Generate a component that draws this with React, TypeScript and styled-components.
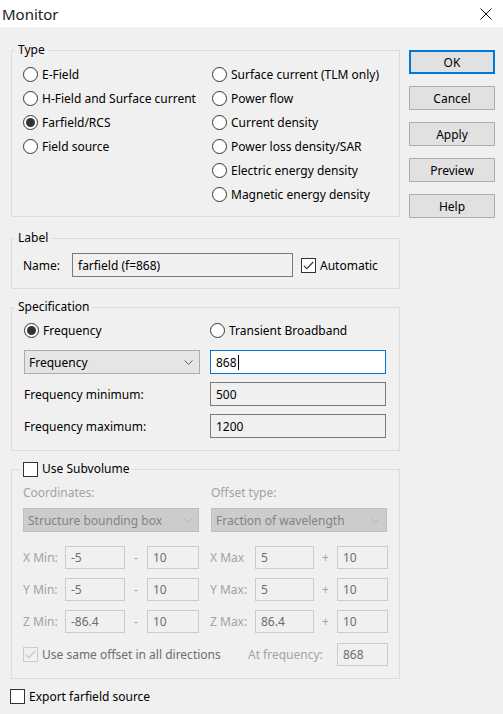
import React from "react";
import styled, { createGlobalStyle, css } from "styled-components";

const GlobalStyle = createGlobalStyle`
  html, body {
    margin: 0;
    padding: 0;
    background: #f0f0f0;
  }
  body {
    font-family: "Noto Sans", "Liberation Sans", sans-serif;
    font-size: 12px;
    color: #000;
  }
`;

const Window = styled.div`
  width: 503px;
  height: 714px;
  background: #f0f0f0;
  display: flex;
  flex-direction: column;
  overflow: hidden;
`;

const TitleBar = styled.div`
  height: 27px;
  flex: none;
  background: #fff;
  display: flex;
  align-items: center;
  justify-content: space-between;
  padding: 0 11px 0 2px;
`;

const Title = styled.span`
  font-size: 15px;
  color: #222;
`;

const CloseIcon = styled.svg`
  width: 12px;
  height: 12px;
  display: block;
`;

const Body = styled.div`
  display: flex;
  gap: 9px;
  padding: 15px 0 0 11px;
`;

const MainColumn = styled.div`
  width: 389px;
  display: flex;
  flex-direction: column;
`;

const ButtonColumn = styled.div`
  width: 86px;
  margin-top: 8px;
  display: flex;
  flex-direction: column;
  gap: 12px;
`;

const DialogButton = styled.button<{ $default?: boolean }>`
  height: 24px;
  box-sizing: border-box;
  background: #e1e1e1;
  border: 1px solid #adadad;
  font: inherit;
  color: #000;
  padding: 0;
  ${(p) =>
    p.$default &&
    css`
      border: 2px solid #0078d7;
    `}
`;

const Group = styled.fieldset<{ $mt?: number; $pb: number; $px?: number }>`
  margin: ${(p) => p.$mt ?? 0}px 0 0 0;
  padding: 0 ${(p) => p.$px ?? 11}px ${(p) => p.$pb}px;
  border: 1px solid #dcdcdc;
  min-width: 0;
`;

const Legend = styled.legend<{ $ml?: number }>`
  padding: 0 3px;
  margin-left: ${(p) => p.$ml ?? -8}px;
  height: 16px;
  line-height: 16px;
`;

const LegendInner = styled.span`
  display: inline-flex;
  align-items: center;
  gap: 4px;
  height: 16px;
`;

const TypeColumns = styled.div`
  display: flex;
  padding-top: 4px;
`;

const RadioColumn = styled.div<{ $w?: number }>`
  display: flex;
  flex-direction: column;
  width: ${(p) => (p.$w ? `${p.$w}px` : "auto")};
`;

const RadioLabel = styled.label<{ $h?: number }>`
  display: flex;
  align-items: center;
  gap: 4px;
  height: ${(p) => p.$h ?? 24}px;
  white-space: nowrap;
`;

const RadioCircle = styled.span<{ $checked?: boolean }>`
  width: 15px;
  height: 15px;
  box-sizing: border-box;
  border: 1px solid #333;
  border-radius: 50%;
  background: #fff;
  flex: none;
  display: flex;
  align-items: center;
  justify-content: center;
  ${(p) =>
    p.$checked &&
    css`
      &::after {
        content: "";
        width: 9px;
        height: 9px;
        border-radius: 50%;
        background: #333;
      }
    `}
`;

const CheckLabel = styled.label<{ $disabled?: boolean }>`
  display: inline-flex;
  align-items: center;
  gap: 4px;
  white-space: nowrap;
  color: ${(p) => (p.$disabled ? "#6d6d6d" : "#000")};
`;

const CheckBox = styled.span<{ $disabled?: boolean }>`
  width: 15px;
  height: 15px;
  box-sizing: border-box;
  border: 1px solid ${(p) => (p.$disabled ? "#cccccc" : "#333")};
  background: ${(p) => (p.$disabled ? "#f0f0f0" : "#fff")};
  flex: none;
  display: flex;
  align-items: center;
  justify-content: center;
`;

const NameRow = styled.div`
  display: flex;
  align-items: center;
  gap: 8px;
  padding-top: 7px;
`;

const FieldLabel = styled.span<{ $w?: number; $disabled?: boolean }>`
  width: ${(p) => (p.$w ? `${p.$w}px` : "auto")};
  flex: none;
  white-space: nowrap;
  color: ${(p) => (p.$disabled ? "#a3a3a3" : "#000")};
`;

type BoxState = "focus" | "normal" | "disabled";

const TextBox = styled.div<{ $w?: number; $h?: number; $state?: BoxState }>`
  width: ${(p) => (p.$w ? `${p.$w}px` : "100%")};
  height: ${(p) => p.$h ?? 24}px;
  box-sizing: border-box;
  flex: none;
  display: flex;
  align-items: center;
  padding-left: 5px;
  border: 1px solid
    ${(p) =>
      p.$state === "focus" ? "#0078d7" : p.$state === "disabled" ? "#cccccc" : "#7a7a7a"};
  background: ${(p) => (p.$state === "focus" ? "#fff" : "#f0f0f0")};
  color: ${(p) => (p.$state === "disabled" ? "#6d6d6d" : "#000")};
  white-space: nowrap;
`;

const Caret = styled.span`
  width: 1px;
  height: 15px;
  background: #000;
  margin-left: 1px;
`;

const Combo = styled.div<{ $disabled?: boolean }>`
  height: 24px;
  box-sizing: border-box;
  display: flex;
  align-items: center;
  justify-content: space-between;
  padding: 0 6px 0 4px;
  border: 1px solid ${(p) => (p.$disabled ? "#bfbfbf" : "#acacac")};
  background: ${(p) => (p.$disabled ? "#cccccc" : "#e5e5e5")};
  color: ${(p) => (p.$disabled ? "#838383" : "#000")};
  white-space: nowrap;
`;

const SpecGrid = styled.div`
  display: grid;
  grid-template-columns: 176px 176px;
  grid-template-rows: 23px 24px 24px 24px;
  column-gap: 10px;
  row-gap: 8px;
  padding-top: 4px;
  align-items: center;
`;

const SubBody = styled.div`
  padding-top: 7px;
  display: flex;
  flex-direction: column;
`;

const SubGrid = styled.div`
  display: grid;
  grid-template-columns: 176px 176px;
  grid-template-rows: 16px 24px;
  column-gap: 12px;
  row-gap: 8px;
  align-items: center;
  margin-bottom: 14px;
`;

const CoordRows = styled.div`
  display: flex;
  flex-direction: column;
  gap: 9px;
`;

const CoordRow = styled.div`
  display: grid;
  grid-template-columns: 42px 60px 22px 52px 56px 59px 23px 51px;
  height: 23px;
  align-items: center;
`;

const Sign = styled.span`
  text-align: center;
  color: #a3a3a3;
`;

const MaxLabel = styled(FieldLabel)`
  padding-left: 11px;
`;

const OffsetRow = styled.div`
  display: grid;
  grid-template-columns: 225px 89px 51px;
  align-items: center;
  margin-top: 10px;
  height: 23px;
`;

const ExportRow = styled.div`
  margin: 10px 0 0 -1px;
  height: 15px;
  display: flex;
  align-items: center;
`;

const Chevron = ({ color }: { color: string }) => (
  <svg width="9" height="5" viewBox="0 0 9 5">
    <polyline points="0.5,0.5 4.5,4.5 8.5,0.5" fill="none" stroke={color} strokeWidth="1" />
  </svg>
);

const Check = ({ color }: { color: string }) => (
  <svg width="11" height="9" viewBox="0 0 11 9">
    <polyline points="0.8,4.6 3.8,7.6 10.2,1" fill="none" stroke={color} strokeWidth="1.1" />
  </svg>
);

const Radio = ({ label, checked, h }: { label: string; checked?: boolean; h?: number }) => (
  <RadioLabel $h={h}>
    <RadioCircle $checked={checked} />
    {label}
  </RadioLabel>
);

const CheckOption = ({
  label,
  checked,
  disabled,
}: {
  label: string;
  checked?: boolean;
  disabled?: boolean;
}) => (
  <CheckLabel $disabled={disabled}>
    <CheckBox $disabled={disabled}>{checked && <Check color={disabled ? "#c4c4c4" : "#333"} />}</CheckBox>
    {label}
  </CheckLabel>
);

const coords = [
  { axis: "X", min: "-5", max: "5", sep: "" },
  { axis: "Y", min: "-5", max: "5", sep: ":" },
  { axis: "Z", min: "-86.4", max: "86.4", sep: ":" },
];

const App = () => {
  return (
    <Window>
      <GlobalStyle />
      <TitleBar>
        <Title>Monitor</Title>
        <CloseIcon viewBox="0 0 12 12">
          <line x1="0.5" y1="0.5" x2="11.5" y2="11.5" stroke="#111" strokeWidth="1" />
          <line x1="11.5" y1="0.5" x2="0.5" y2="11.5" stroke="#111" strokeWidth="1" />
        </CloseIcon>
      </TitleBar>
      <Body>
        <MainColumn>
          <Group $pb={10}>
            <Legend>Type</Legend>
            <TypeColumns>
              <RadioColumn $w={189}>
                <Radio label="E-Field" />
                <Radio label="H-Field and Surface current" />
                <Radio label="Farfield/RCS" checked />
                <Radio label="Field source" />
              </RadioColumn>
              <RadioColumn>
                <Radio label="Surface current (TLM only)" />
                <Radio label="Power flow" />
                <Radio label="Current density" />
                <Radio label="Power loss density/SAR" />
                <Radio label="Electric energy density" />
                <Radio label="Magnetic energy density" />
              </RadioColumn>
            </TypeColumns>
          </Group>

          <Group $mt={13} $pb={11}>
            <Legend>Label</Legend>
            <NameRow>
              <FieldLabel $w={41}>Name:</FieldLabel>
              <TextBox $w={221}>farfield (f=868)</TextBox>
              <CheckOption label="Automatic" checked />
            </NameRow>
          </Group>

          <Group $mt={10} $pb={12} $px={12}>
            <Legend $ml={-9}>Specification</Legend>
            <SpecGrid>
              <Radio label="Frequency" checked h={23} />
              <Radio label="Transient Broadband" h={23} />
              <Combo>
                Frequency
                <Chevron color="#606060" />
              </Combo>
              <TextBox $state="focus">
                868
                <Caret />
              </TextBox>
              <FieldLabel>Frequency minimum:</FieldLabel>
              <TextBox>500</TextBox>
              <FieldLabel>Frequency maximum:</FieldLabel>
              <TextBox>1200</TextBox>
            </SpecGrid>
          </Group>

          <Group $mt={10} $pb={12}>
            <Legend $ml={-3}>
              <LegendInner>
                <CheckBox />
                Use Subvolume
              </LegendInner>
            </Legend>
            <SubBody>
              <SubGrid>
                <FieldLabel $disabled>Coordinates:</FieldLabel>
                <FieldLabel $disabled>Offset type:</FieldLabel>
                <Combo $disabled>
                  Structure bounding box
                  <Chevron color="#b4b4b4" />
                </Combo>
                <Combo $disabled>
                  Fraction of wavelength
                  <Chevron color="#b4b4b4" />
                </Combo>
              </SubGrid>
              <CoordRows>
                {coords.map((c) => (
                  <CoordRow key={c.axis}>
                    <FieldLabel $disabled>{c.axis} Min:</FieldLabel>
                    <TextBox $h={23} $state="disabled">
                      {c.min}
                    </TextBox>
                    <Sign>-</Sign>
                    <TextBox $h={23} $state="disabled">
                      10
                    </TextBox>
                    <MaxLabel $disabled>
                      {c.axis} Max{c.sep}
                    </MaxLabel>
                    <TextBox $h={23} $state="disabled">
                      {c.max}
                    </TextBox>
                    <Sign>+</Sign>
                    <TextBox $h={23} $state="disabled">
                      10
                    </TextBox>
                  </CoordRow>
                ))}
              </CoordRows>
              <OffsetRow>
                <CheckOption label="Use same offset in all directions" checked disabled />
                <FieldLabel $disabled>At frequency:</FieldLabel>
                <TextBox $h={23} $state="disabled">
                  868
                </TextBox>
              </OffsetRow>
            </SubBody>
          </Group>

          <ExportRow>
            <CheckOption label="Export farfield source" />
          </ExportRow>
        </MainColumn>

        <ButtonColumn>
          <DialogButton $default>OK</DialogButton>
          <DialogButton>Cancel</DialogButton>
          <DialogButton>Apply</DialogButton>
          <DialogButton>Preview</DialogButton>
          <DialogButton>Help</DialogButton>
        </ButtonColumn>
      </Body>
    </Window>
  );
};

export default App;
